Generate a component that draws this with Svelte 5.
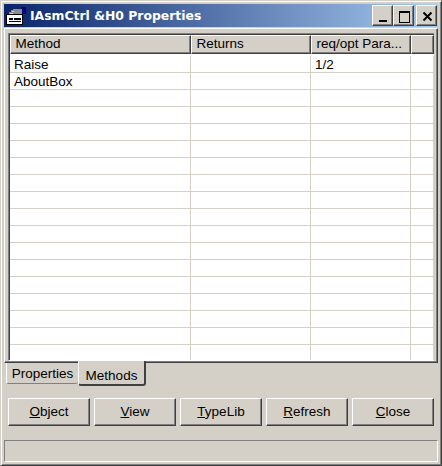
<script>
  const columns = [
    { label: 'Method', width: 181 },
    { label: 'Returns', width: 120 },
    { label: 'req/opt Para...', width: 100 },
    { label: '', width: 23 }
  ];
  const rows = [
    ['Raise', '', '1/2', ''],
    ['AboutBox', '', '', '']
  ];
  for (let i = rows.length; i < 18; i++) rows.push(['', '', '', '']);
  const buttons = [
    ['O', 'bject'],
    ['V', 'iew'],
    ['T', 'ypeLib'],
    ['R', 'efresh'],
    ['C', 'lose']
  ];
</script>

<div class="window">
  <div class="titlebar">
    <svg class="appicon" width="20" height="18" viewBox="0 0 20 18" shape-rendering="crispEdges">
      <path d="M15 0h5v7h-4V3h-1z" fill="#000080" />
      <path d="M7 2h9v5H3v-2h2V3h2z" fill="#8c8c8c" />
      <path d="M6 4h2v1H6zM4 6h3v1H4z" fill="#d4d0c8" />
      <path d="M0 7h17v11H0z" fill="#000" />
      <path d="M1 8h15v9H1z" fill="#fff" />
      <path d="M3 11h4v2H3zM8 11h7v2H8zM3 14h12v1H3z" fill="#000" />
    </svg>
    <span class="title">IAsmCtrl &amp;H0 Properties</span>
    <div class="controls">
      <button class="ctl" aria-label="Minimize">
        <svg width="16" height="14" viewBox="0 0 16 14" shape-rendering="crispEdges"><path d="M4 11h8v2H4z" fill="#000" /></svg>
      </button>
      <button class="ctl" aria-label="Maximize">
        <svg width="16" height="14" viewBox="0 0 16 14" shape-rendering="crispEdges"><path d="M3 2h11v12H3z M4 4v9h9V4z" fill="#000" fill-rule="evenodd" /></svg>
      </button>
      <button class="ctl close" aria-label="Close">
        <svg width="16" height="14" viewBox="0 0 16 14"><path d="M4.5 3.5l8 8M12.5 3.5l-8 8" stroke="#000" stroke-width="2" fill="none" /></svg>
      </button>
    </div>
  </div>

  <div class="page">
    <div class="grid">
      <div class="grid-inner">
        <div class="row header">
          {#each columns as col}
            <div class="hcell" style="width: {col.width}px">{col.label}</div>
          {/each}
        </div>
        <div class="body">
          {#each rows as row}
            <div class="row datarow">
              {#each row as cell, i}
                <div class="cell" style="width: {columns[i].width}px">{cell}</div>
              {/each}
            </div>
          {/each}
        </div>
      </div>
    </div>
  </div>

  <div class="tabs">
    <div class="tab back">Properties</div>
    <div class="tab active">Methods</div>
  </div>

  <div class="buttons">
    {#each buttons as b}
      <button class="btn"><span class="ul">{b[0]}</span>{b[1]}</button>
    {/each}
  </div>

  <div class="status"></div>
</div>

<style>
  :global(body) {
    margin: 0;
    background: #d4d0c8;
  }
  .window {
    box-sizing: border-box;
    width: 442px;
    height: 466px;
    padding: 3px;
    background: #d4d0c8;
    border: 1px solid;
    border-color: #d4d0c8 #404040 #404040 #d4d0c8;
    box-shadow: inset 1px 1px 0 #fff, inset -1px -1px 0 #808080;
    display: flex;
    flex-direction: column;
    font-family: "Liberation Sans", Arial, sans-serif;
    font-size: 13.5px;
    color: #000;
  }
  .titlebar {
    height: 23px;
    flex: none;
    display: flex;
    align-items: center;
    background: linear-gradient(90deg, #0a246a, #a6caf0);
    padding: 0 1px 0 2px;
  }
  .appicon {
    flex: none;
    margin-right: 4px;
  }
  .title {
    font-family: "DejaVu Sans", Verdana, sans-serif;
    font-weight: bold;
    font-size: 12.4px;
    color: #fff;
    white-space: nowrap;
  }
  .controls {
    margin-left: auto;
    display: flex;
  }
  .ctl {
    box-sizing: border-box;
    width: 21px;
    height: 21px;
    padding: 0;
    background: #d4d0c8;
    border: 1px solid;
    border-color: #fff #404040 #404040 #fff;
    box-shadow: inset -1px -1px 0 #808080;
    display: flex;
    align-items: center;
    justify-content: center;
  }
  .close {
    margin-left: 2px;
  }
  .page {
    box-sizing: border-box;
    height: 335px;
    margin-top: 1px;
    flex: none;
    padding: 4px 3px 0 3px;
    border: 1px solid;
    border-color: #fff #404040 #404040 #fff;
    box-shadow: inset -1px -1px 0 #808080;
  }
  .grid {
    box-sizing: border-box;
    width: 426px;
    height: 328px;
    border: 1px solid;
    border-color: #808080 #d4d0c8 #fff #808080;
    border-right: 0;
  }
  .grid-inner {
    box-sizing: border-box;
    height: 100%;
    border: 1px solid;
    border-color: #404040 transparent transparent #404040;
    border-right: 0;
    border-bottom: 0;
    background: #fff;
    overflow: hidden;
  }
  .row {
    display: flex;
  }
  .header {
    height: 19px;
    margin-bottom: 2px;
    background: #d4d0c8;
  }
  .hcell {
    box-sizing: border-box;
    height: 19px;
    padding: 0 0 0 4.5px;
    background: #d4d0c8;
    border: 1px solid;
    border-color: #fff #404040 #404040 #fff;
    box-shadow: inset -1px -1px 0 #808080;
    white-space: nowrap;
    overflow: hidden;
    line-height: 15px;
    flex: none;
  }
  .datarow {
    height: 17px;
  }
  .cell {
    box-sizing: border-box;
    height: 17px;
    padding: 1px 0 0 4px;
    border-right: 1px solid #d4d0c8;
    border-bottom: 1px solid #d4d0c8;
    line-height: 15px;
    flex: none;
    white-space: nowrap;
  }
  .tabs {
    display: flex;
    align-items: flex-start;
    height: 25px;
    flex: none;
    padding-left: 2px;
    margin-top: -2px;
    position: relative;
  }
  .tab {
    box-sizing: border-box;
    flex: none;
    background: #d4d0c8;
    border-radius: 0 0 3px 3px;
    text-align: center;
    line-height: 15px;
  }
  .back {
    width: 72px;
    height: 21px;
    margin-top: 2px;
    padding-top: 3px;
    border-left: 1px solid #fff;
    border-bottom: 1px solid #808080;
  }
  .active {
    width: 68px;
    height: 25px;
    padding-top: 7px;
    border-left: 1px solid #fff;
    border-right: 2px solid #404040;
    border-bottom: 2px solid #404040;
  }
  .buttons {
    display: flex;
    gap: 4px;
    margin: 12px 0 0 4px;
    flex: none;
  }
  .btn {
    box-sizing: border-box;
    width: 82px;
    height: 28px;
    padding: 0 0 2px;
    background: #d4d0c8;
    border: 1px solid;
    border-color: #fff #404040 #404040 #fff;
    box-shadow: inset -1px -1px 0 #808080;
    font: inherit;
    color: #000;
  }
  .ul {
    text-decoration: underline;
  }
  .status {
    box-sizing: border-box;
    height: 22px;
    margin-top: 14px;
    flex: none;
    border: 1px solid;
    border-color: #808080 #fff #fff #808080;
  }
</style>
